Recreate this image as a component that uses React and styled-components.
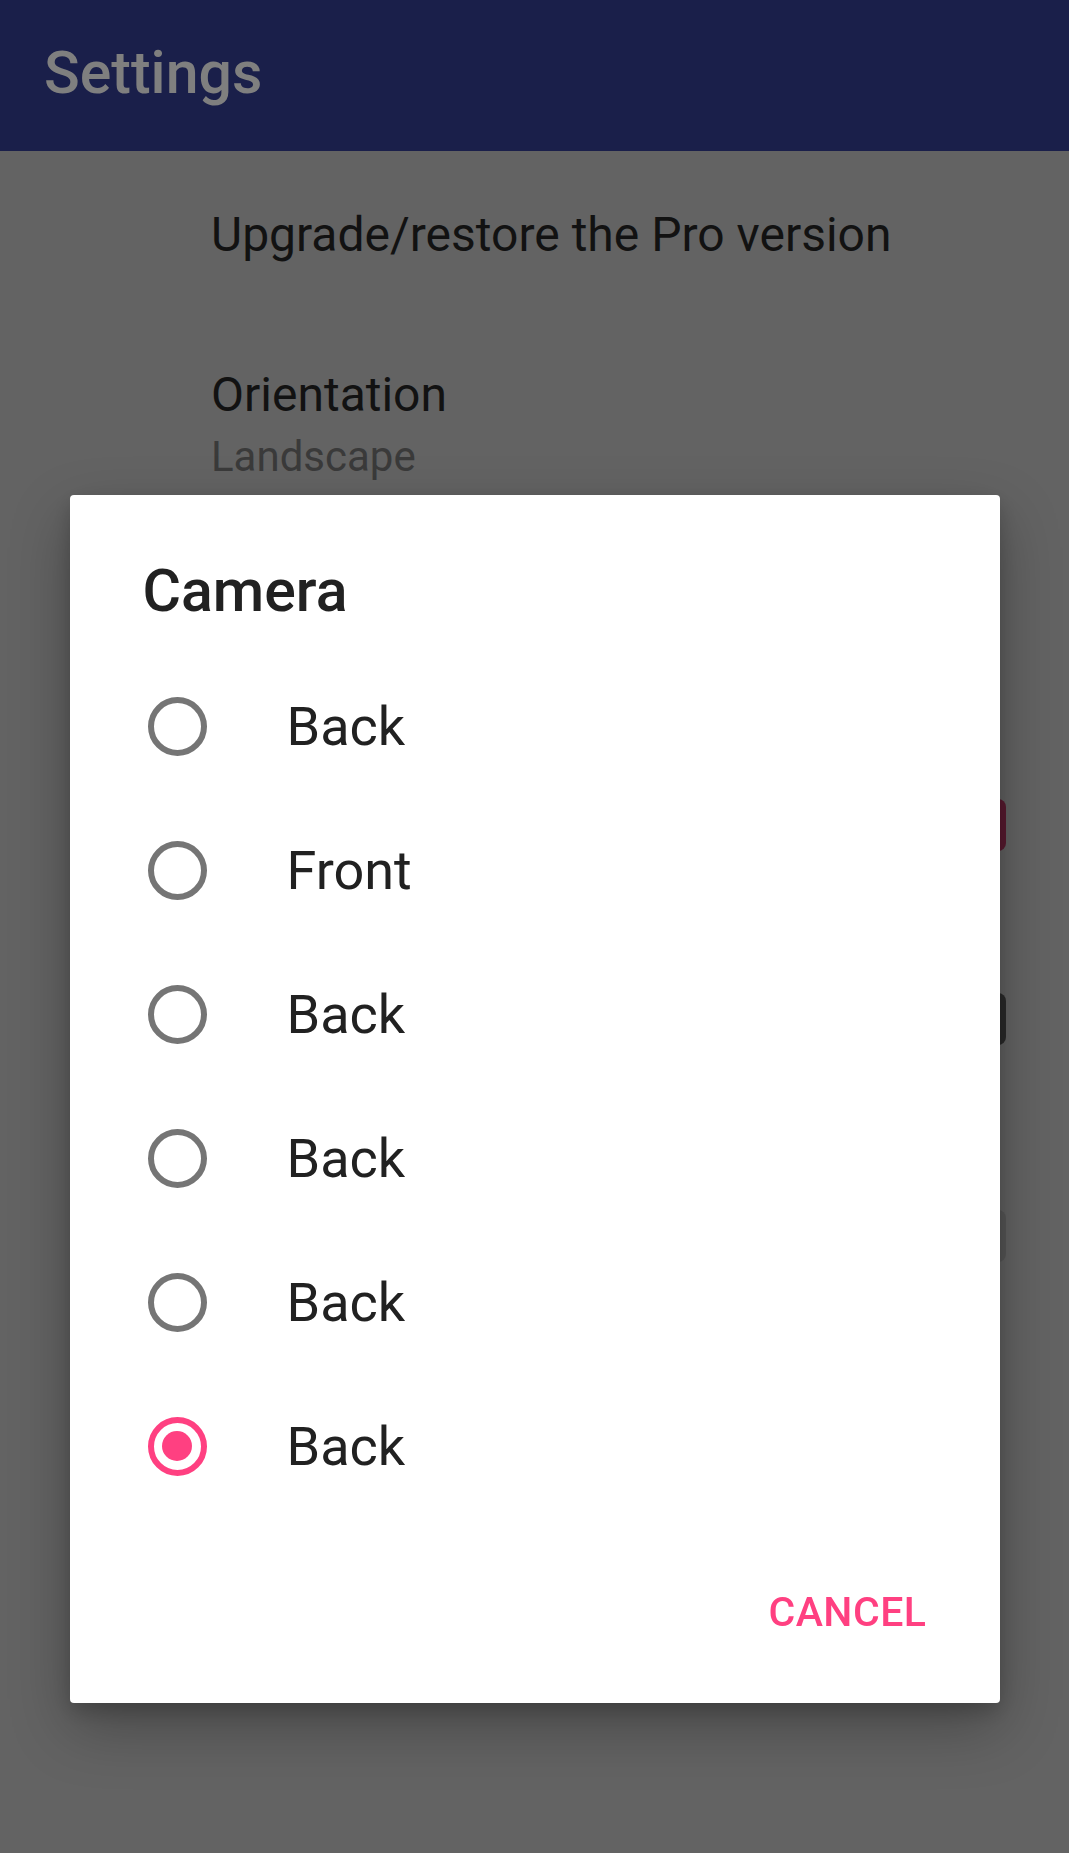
import React from "react";
import styled, { createGlobalStyle } from "styled-components";

const GlobalStyle = createGlobalStyle`
  html, body {
    margin: 0;
    padding: 0;
    background: #636363;
    font-family: Roboto, "Noto Sans", sans-serif;
  }
  * { box-sizing: border-box; }
`;

const cameras = ["Back", "Front", "Back", "Back", "Back", "Back"];

const App = () => {
  return (
    <>
      <GlobalStyle />
      <Page>
        <Toolbar>
          <ToolbarTitle>Settings</ToolbarTitle>
        </Toolbar>
        <PrefList>
          <PrefRow height={168}>
            <PrefTitle>Upgrade/restore the Pro version</PrefTitle>
          </PrefRow>
          <PrefRow height={200} top>
            <PrefTitle>Orientation</PrefTitle>
            <PrefSummary>Landscape</PrefSummary>
          </PrefRow>
          <PrefRow height={206} />
          <PrefRow height={200}>
            <Switch tone="on" />
          </PrefRow>
          <PrefRow height={188}>
            <Switch tone="dark" />
          </PrefRow>
          <PrefRow height={246}>
            <Switch tone="off" />
          </PrefRow>
        </PrefList>
      </Page>

      <Scrim>
        <Dialog>
          <DialogTitle>Camera</DialogTitle>
          <Options>
            {cameras.map((name, i) => (
              <Option key={i}>
                <Radio checked={i === cameras.length - 1} />
                <OptionLabel>{name}</OptionLabel>
              </Option>
            ))}
          </Options>
          <Actions>
            <TextButton>Cancel</TextButton>
          </Actions>
        </Dialog>
      </Scrim>
    </>
  );
};

export default App;

const Page = styled.div`
  width: 100%;
  min-height: 100vh;
  background: #636363;
`;

const Toolbar = styled.header`
  height: 151px;
  background: #1a1f4a;
  display: flex;
  align-items: center;
  padding-left: 44px;
`;

const ToolbarTitle = styled.h1`
  margin: 0;
  font-size: 59px;
  font-weight: 500;
  color: #7f7f7f;
  line-height: 1;
  margin-top: -6px;
`;

const PrefList = styled.div`
  display: flex;
  flex-direction: column;
`;

const PrefRow = styled.div`
  height: ${(p) => p.height}px;
  padding: ${(p) => (p.top ? "49px" : "0")} 63px 0 211px;
  display: flex;
  flex-direction: column;
  justify-content: ${(p) => (p.top ? "flex-start" : "center")};
  align-items: flex-start;
`;

const PrefTitle = styled.div`
  font-size: 48px;
  line-height: 54px;
  color: #121212;
`;

const PrefSummary = styled.div`
  margin-top: 11px;
  font-size: 42px;
  line-height: 48px;
  color: #3a3a3a;
`;

const switchColors = {
  on: "#5a1a30",
  dark: "#2a2a2a",
  off: "#585858",
};

const Switch = styled.span`
  align-self: flex-end;
  width: 60px;
  height: 52px;
  border-radius: 8px;
  background: ${(p) => switchColors[p.tone]};
`;

const Scrim = styled.div`
  position: fixed;
  inset: 0;
  display: flex;
  justify-content: center;
  align-items: flex-start;
  padding-top: 495px;
`;

const Dialog = styled.div`
  width: 930px;
  height: 1208px;
  background: #ffffff;
  border-radius: 4px;
  box-shadow: 0 24px 60px rgba(0, 0, 0, 0.28), 0 8px 20px rgba(0, 0, 0, 0.18);
  padding: 61px 0 0;
  display: flex;
  flex-direction: column;
`;

const DialogTitle = styled.h2`
  margin: 0 0 28px 73px;
  font-size: 59px;
  font-weight: 500;
  line-height: 70px;
  color: #212121;
`;

const Options = styled.div`
  display: flex;
  flex-direction: column;
`;

const Option = styled.div`
  height: 144px;
  display: flex;
  align-items: center;
  padding-left: 78px;
`;

const Radio = styled.span`
  flex: none;
  width: 59px;
  height: 59px;
  border-radius: 50%;
  border: 6px solid ${(p) => (p.checked ? "#ff4081" : "#757575")};
  display: flex;
  align-items: center;
  justify-content: center;

  &::after {
    content: "";
    width: 30px;
    height: 30px;
    border-radius: 50%;
    background: #ff4081;
    display: ${(p) => (p.checked ? "block" : "none")};
  }
`;

const OptionLabel = styled.span`
  margin-left: 80px;
  font-size: 54px;
  color: #212121;
`;

const Actions = styled.div`
  display: flex;
  justify-content: flex-end;
  padding: 70px 73px 0 0;
`;

const TextButton = styled.button`
  border: none;
  background: none;
  padding: 0;
  font-family: Roboto, sans-serif;
  font-size: 41px;
  font-weight: 500;
  line-height: 48px;
  letter-spacing: 0.5px;
  text-transform: uppercase;
  color: #ff4081;
`;
